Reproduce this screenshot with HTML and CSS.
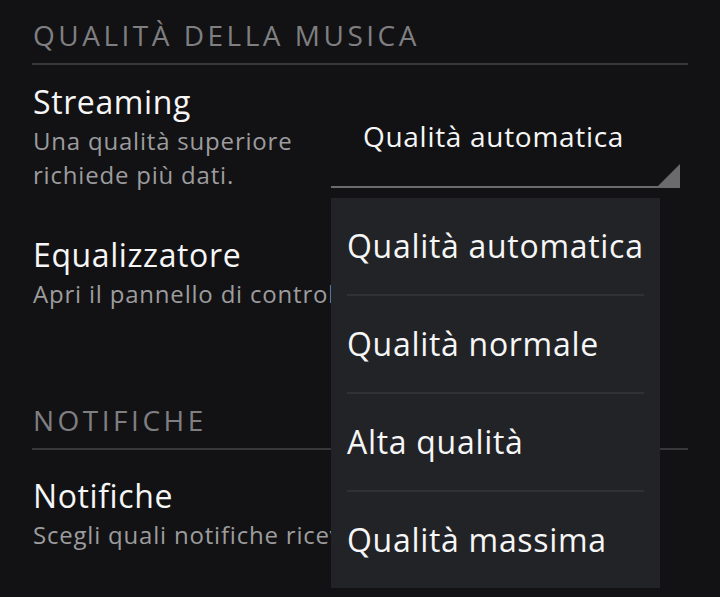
FILE: index.html
```html
<!DOCTYPE html>
<html lang="it">
<head>
<meta charset="utf-8">
<title>Impostazioni</title>
<link rel="stylesheet" href="styles.css">
</head>
<body>
<div class="screen">
  <section class="section section-music">
    <h2 class="section-title">QUALITÀ DELLA MUSICA</h2>
    <div class="row row-streaming">
      <div class="row-text">
        <div class="row-title">Streaming</div>
        <div class="row-sub">Una qualità superiore richiede più dati.</div>
      </div>
      <div class="select">
        <span class="select-value">Qualità automatica</span>
        <svg class="select-corner" width="22" height="22" viewBox="0 0 22 22"><polygon points="22,0 22,22 0,22" fill="#6b6b6d"/></svg>
      </div>
    </div>
    <div class="row row-eq">
      <div class="row-text">
        <div class="row-title">Equalizzatore</div>
        <div class="row-sub nowrap">Apri il pannello di controllo dell'equalizzatore</div>
      </div>
    </div>
  </section>
  <section class="section section-notif">
    <h2 class="section-title">NOTIFICHE</h2>
    <div class="row row-notif">
      <div class="row-text">
        <div class="row-title">Notifiche</div>
        <div class="row-sub nowrap">Scegli quali notifiche ricevere</div>
      </div>
    </div>
  </section>
  <ul class="menu">
    <li class="menu-item"><span>Qualità automatica</span></li>
    <li class="menu-item"><span>Qualità normale</span></li>
    <li class="menu-item"><span>Alta qualità</span></li>
    <li class="menu-item last"><span>Qualità massima</span></li>
  </ul>
</div>
</body>
</html>
```
FILE: styles.css
```css
html, body {
  margin: 0;
  padding: 0;
  background: #121214;
}
body {
  font-family: "Open Sans", "Noto Sans", sans-serif;
  color: #f4f4f4;
  width: 720px;
  height: 597px;
  overflow: hidden;
}
.screen {
  position: relative;
  padding: 0 32px;
  height: 597px;
}
.section-title {
  margin: 0;
  font-weight: 400;
  font-size: 28px;
  line-height: 36px;
  letter-spacing: 3.5px;
  color: #7f7f82;
  border-bottom: 2px solid #38383b;
  padding-left: 1px;
}
.section-music .section-title {
  padding-top: 17px;
  padding-bottom: 10px;
}
.section-notif {
  margin-top: 91px;
}
.section-notif .section-title {
  padding-bottom: 10px;
}
.row {
  display: flex;
  align-items: flex-start;
}
.row-text {
  flex: 0 0 auto;
  padding-left: 1px;
}
.row-streaming .row-text {
  width: 298px;
}
.row-title {
  font-size: 32px;
  line-height: 40px;
  letter-spacing: 0.6px;
  color: #f6f6f6;
}
.row-sub {
  font-size: 24px;
  line-height: 34px;
  letter-spacing: 0.8px;
  color: #9c9c9e;
  margin-top: 2px;
}
.nowrap {
  white-space: nowrap;
}
.row-streaming {
  margin-top: 17px;
}
.row-eq {
  margin-top: 43px;
}
.row-notif {
  margin-top: 26px;
}
.select {
  position: relative;
  width: 317px;
  margin-top: 34px;
  padding-left: 32px;
  padding-bottom: 30px;
  border-bottom: 2px solid #6b6b6d;
  font-size: 28px;
  line-height: 40px;
  letter-spacing: 0.7px;
  color: #f6f6f6;
}
.select-corner {
  position: absolute;
  right: 0;
  bottom: 0;
  display: block;
}
.menu {
  position: absolute;
  left: 331px;
  top: 198px;
  width: 329px;
  height: 390px;
  margin: 0;
  padding: 0;
  list-style: none;
  background: #222326;
}
.menu-item {
  padding: 0 16px;
}
.menu-item span {
  display: block;
  height: 96px;
  line-height: 96px;
  font-size: 32px;
  letter-spacing: 0.7px;
  color: #f6f6f6;
  border-bottom: 2px solid #303135;
  white-space: nowrap;
}
.menu-item.last span {
  border-bottom: none;
}
```
